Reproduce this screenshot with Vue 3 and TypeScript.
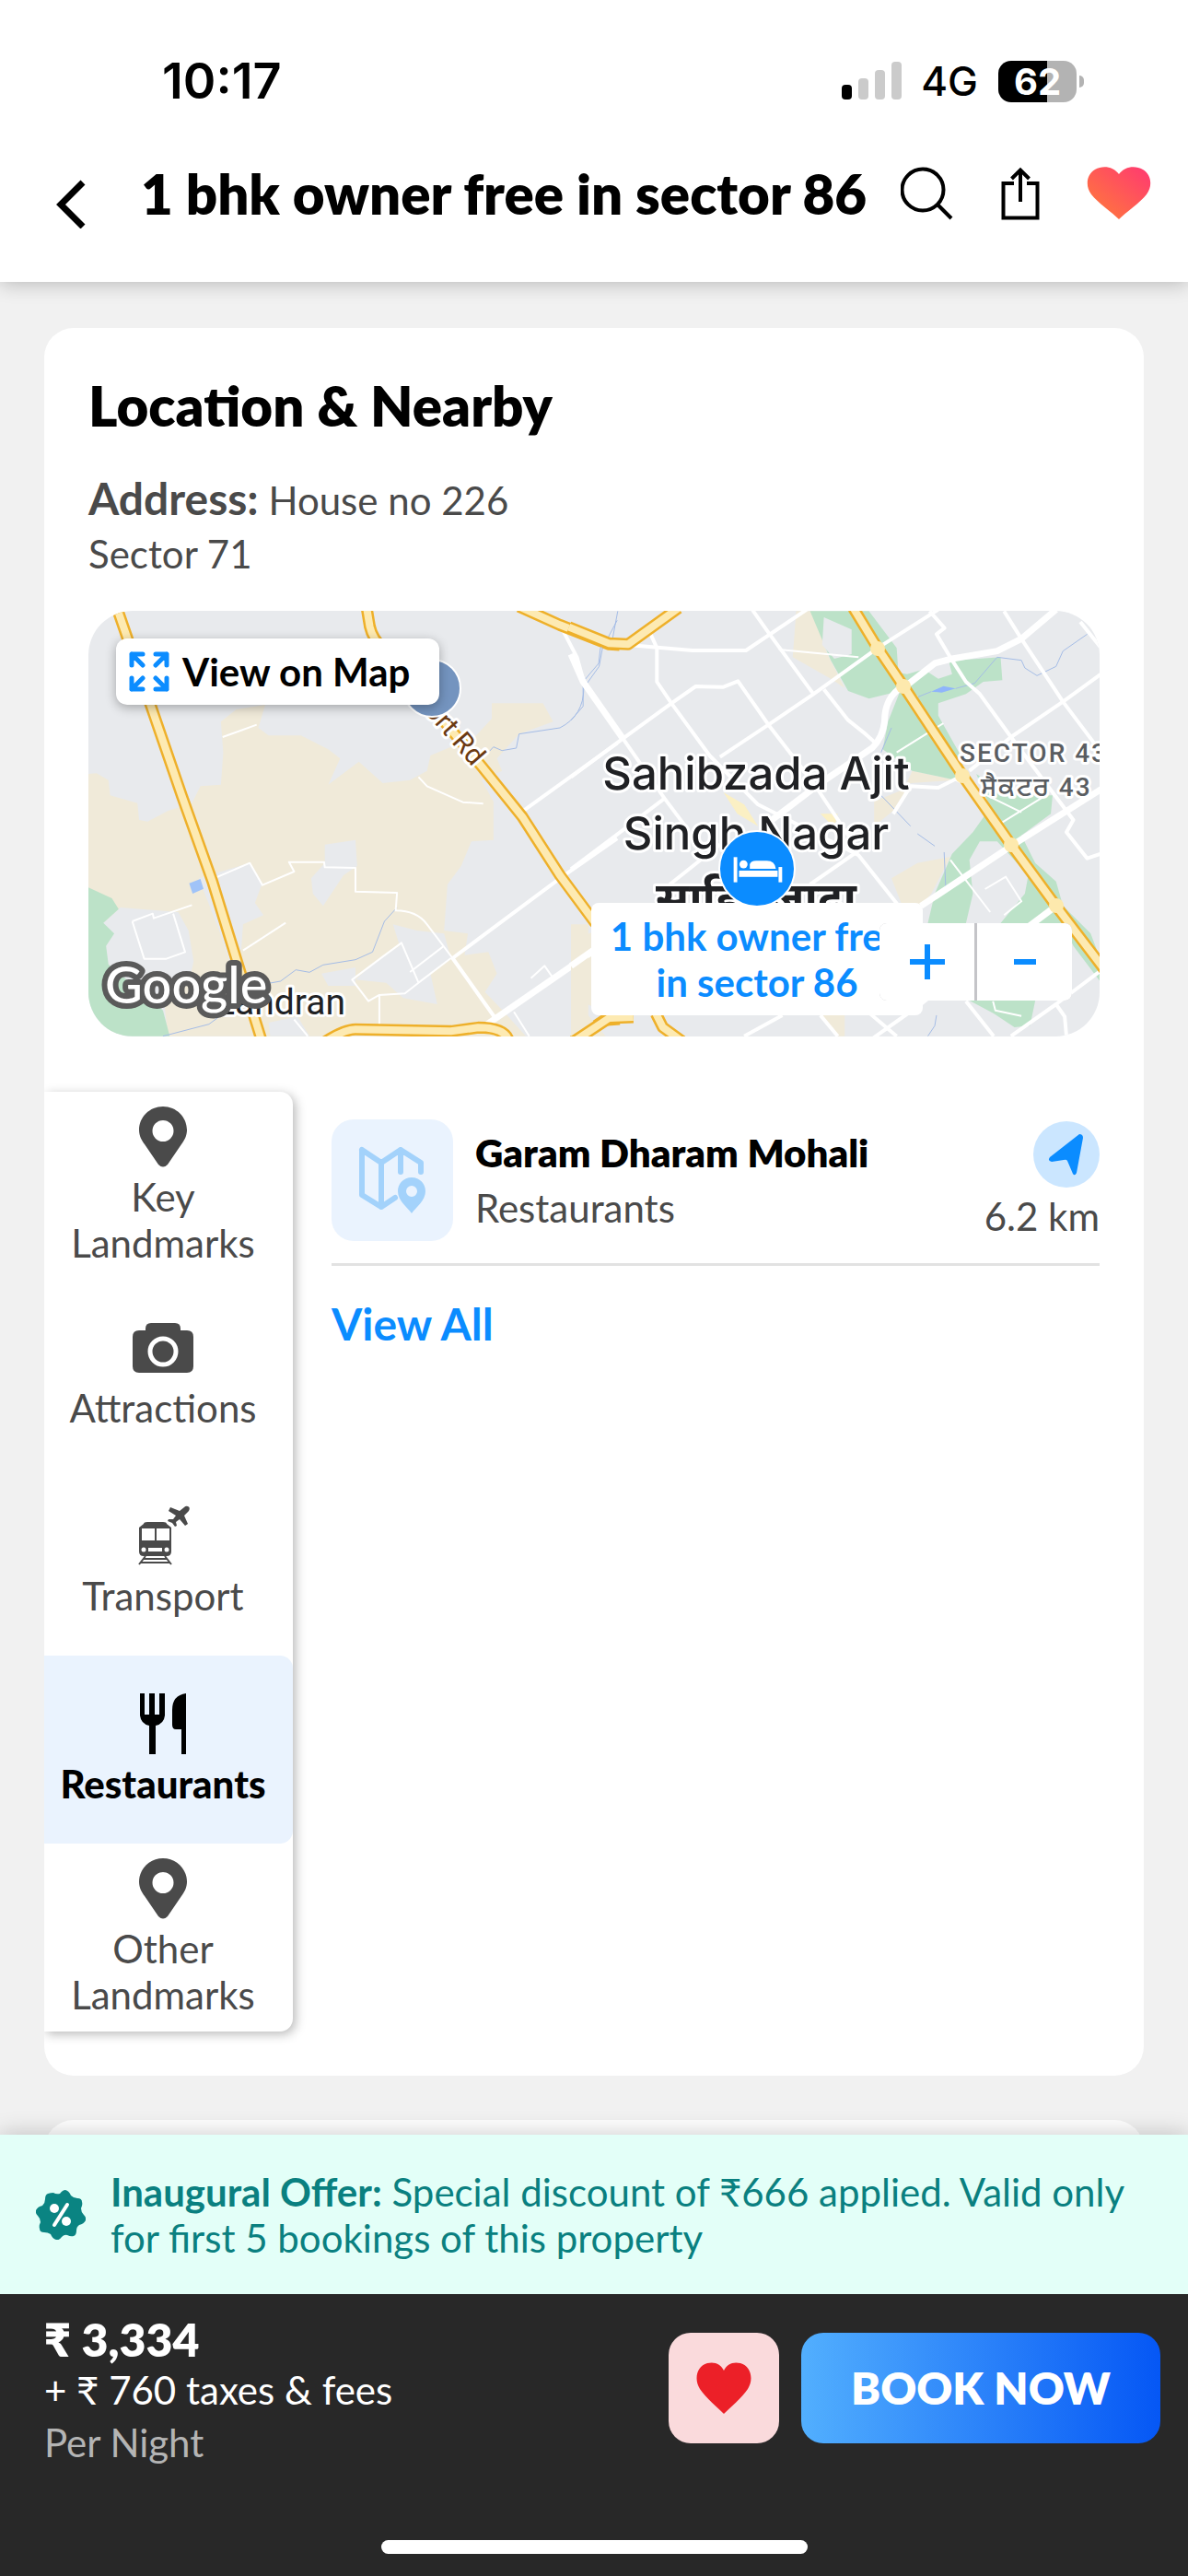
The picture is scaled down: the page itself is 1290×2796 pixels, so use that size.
<script setup lang="ts">
import { ref } from 'vue'

type IconName = 'pin' | 'camera' | 'transport' | 'food'

interface Category {
  id: string
  label: string
  icon: IconName
}

interface Place {
  name: string
  kind: string
  distance: string
}

const title = '1 bhk owner free in sector 86'

const categories: Category[] = [
  { id: 'key', label: 'Key Landmarks', icon: 'pin' },
  { id: 'attractions', label: 'Attractions', icon: 'camera' },
  { id: 'transport', label: 'Transport', icon: 'transport' },
  { id: 'restaurants', label: 'Restaurants', icon: 'food' },
  { id: 'other', label: 'Other Landmarks', icon: 'pin' },
]

const active = ref<string>('restaurants')

const places: Place[] = [
  { name: 'Garam Dharam Mohali', kind: 'Restaurants', distance: '6.2 km' },
]

// Street geometry of the two map tiles, in tile units
const westHighways: string[] = [
  'M100 30L200 350L290 640L380 920L455 1190L525 1440',
  'M833 30L842 90Q850 130 880 160L1170 545L1290 710L1400 900L1500 1050L1568 1130',
  'M1280 25L1400 85L1545 148L1575 150',
  'M700 1450Q765 1402 800 1402L1080 1408L1160 1396Q1240 1396 1250 1440',
  'M1440 1440L1530 1372L1575 1368',
]
const eastHighways: string[] = [
  'M-6 92L110 145L165 148L310 30',
  'M815 30L885 160L960 285L1130 575L1270 800L1400 1000L1545 1215',
  'M10 1440L110 1365L180 1362',
  'M245 1350L265 1395L320 1440',
]
const westStreets: string[] = [
  'M1280 700L1568 470',
  'M1210 1365L1085 1170L1400 910L1568 780',
  'M1405 95L1450 190L1470 270L1568 425',
]
const eastStreets: string[] = [
  'M520 30L570 110L700 310',
  'M165 150L350 168L505 168L700 20',
  'M0 580L150 455L290 340L360 285L440 287L482 268L570 410L700 310L885 160L1060 35',
  'M222 95L248 160L248 270L290 340L400 510L540 670L830 835L960 1020',
  'M570 410L430 515',
  'M570 410L700 600L830 820',
  'M150 455L270 650L330 740',
  'M0 880L130 770L270 650',
  'M285 930L430 800',
  'M730 295L800 395L850 440L880 470',
  'M690 930L830 820',
  'M1035 40L1078 95L1055 115L1100 200L1140 270L1180 310L1270 450L1450 720L1430 760L1490 845L1530 830',
  'M1250 40L1300 130L1420 335L1530 500',
  'M1470 75L1530 160M1530 245L1420 335L1270 450L1150 560',
  'M980 610L1060 615L1130 575M980 610L930 700',
  'M1140 1310L1220 1424M720 1356L770 1424M800 1290L940 1424',
  'M860 1440L1010 1320L1120 1220M1270 1424L1400 1320L1530 1210',
  'M1400 1320L1425 1360L1430 1424',
  'M500 1424L610 1356',
]
const eastAvenues: string[] = [
  'M0 180L35 270L150 455',
  'M965 285L1050 210L1100 195L1230 170L1300 130L1400 35',
  'M945 295Q905 330 905 400Q900 450 870 485L720 600L580 720',
  'M1010 1000L1270 805L1530 620',
  'M0 1195L70 1140',
  'M1300 1085L1400 1000',
]
const lanes: string[] = [
  'M410 450L510 410',
  'M985 580L1010 610L1115 662L1175 667',
  'M385 910L490 860L527 932L620 888L605 857L708 857L710 874L800 876L800 953L922 957L918 1015Q980 1015 1010 1060L1085 1170',
  'M145 1050L205 1025L208 1040L320 997M145 1050L180 1172L245 1172L300 1150L265 1025',
  'M470 1145L595 1055',
  'M790 1240L880 1165L935 1120L985 1250L945 1285L870 1290L838 1310ZM870 1290L870 1400M985 1250L1080 1170M960 1215L1060 1130',
  'M1265 1345L1310 1424M1315 1235L1355 1195L1380 1235M620 1370L660 1424',
]
</script>

<template>
  <div class="page">
    <header class="topbar">
      <div class="status">
        <span class="clock">10:17</span>
        <span class="status-right">
          <svg class="signal" viewBox="0 0 66 42" aria-hidden="true">
            <rect x="0" y="25" width="11" height="16" rx="4" fill="#000" />
            <rect x="18" y="18" width="11" height="23" rx="4" fill="#cbcbcb" />
            <rect x="36" y="9" width="11" height="32" rx="4" fill="#cbcbcb" />
            <rect x="54" y="0" width="11" height="41" rx="4" fill="#cbcbcb" />
          </svg>
          <span class="network">4G</span>
          <span class="battery"><span class="level">62</span><i class="nub"></i></span>
        </span>
      </div>
      <nav class="nav">
        <button class="icon-btn back" type="button" aria-label="Back">
          <svg viewBox="0 0 44 76"><path d="M34 26L10 50L34 74" fill="none" stroke="#000" stroke-width="7" /></svg>
        </button>
        <h1 class="title">{{ title }}</h1>
        <div class="actions">
          <button class="icon-btn" type="button" aria-label="Search">
            <svg viewBox="0 0 58 58" fill="none" stroke="#000">
              <circle cx="24" cy="25" r="22.500" stroke-width="4" />
              <path d="M40 41L55 56" stroke-width="4" />
            </svg>
          </button>
          <button class="icon-btn share" type="button" aria-label="Share">
            <svg viewBox="0 0 44 58" fill="none" stroke="#000" stroke-width="4">
              <path d="M15 18H3.500V55.500H40.500V18H29M22 38V4M12.500 13L22 3.500L31.500 13" />
            </svg>
          </button>
          <button class="icon-btn heart" type="button" aria-label="Saved">
            <svg viewBox="0 0 70 58">
              <defs>
                <linearGradient id="heartFill" x1="0" y1="1" x2="1" y2="0">
                  <stop offset="0.200" stop-color="#ff7043" />
                  <stop offset="0.900" stop-color="#ff3f6c" />
                </linearGradient>
              </defs>
              <path fill="url(#heartFill)" d="M35 57C28 50 12 39 5 30C-2 21 0 8 9 3C18-2 29 0 35 8C41 0 52-2 61 3C70 8 72 21 65 30C58 39 42 50 35 57Z" />
            </svg>
          </button>
        </div>
      </nav>
    </header>

    <main class="content">
      <section class="card">
        <h2 class="heading">Location &amp; Nearby</h2>
        <p class="address"><strong>Address:</strong> House no 226<br />Sector 71</p>

        <div class="map">
          <svg class="map-art" viewBox="0 0 1098 462" preserveAspectRatio="xMidYMid slice" role="img" aria-label="Map">
            <rect width="1098" height="462" fill="#e8eaed" />
            <g class="tile" transform="translate(-6 -13) scale(.37 .33333)">
              <path fill="#f0ead9" d="M16 570L40 568L75 590L80 640L160 665L165 720L190 725L250 690L320 665L345 610L405 605L412 500L405 400L450 360L535 345L515 420L545 445L640 445L720 490L755 520L720 605L810 530L880 600L960 590L1010 560L1020 510L1150 450L1200 390L1200 340L1350 340L1380 400L1280 440L1215 520L1230 560L1170 590L1205 660L1205 785L1140 790L1110 870L1070 930L1060 1080L1130 1090L1120 1160L1190 1150L1215 1220L1180 1280L1240 1350L1300 1424H250L240 1330L320 1200L70 1130L60 1000L16 940Z" />
              <path fill="#f0ead9" d="M1455 1100L1568 1060V1360L1480 1320L1440 1230Z" />
              <path fill="#e8eaed" d="M710 800L800 785L805 870L765 900L705 1000L675 960L670 910L710 860ZM340 910L490 860L525 930L505 990L530 1030L470 1060L465 1140L430 1180L400 1080ZM60 1055L110 1005L280 1020L310 1080L325 1180L310 1260L160 1260L75 1185ZM910 1060L980 1080L1060 1090L1080 1170L1020 1220L1040 1320L940 1300L890 1250L800 1240L870 1170L930 1130ZM700 1220L800 1200L800 1260L720 1260ZM545 1380L630 1360L665 1424H550Z" />
              <path fill="#bce2c8" d="M16 940L85 975L105 1010L60 1055L92 1090L68 1130L75 1190L235 1340L255 1424H0V940Z" />
              <path fill="#a0c3f8" d="M312 926L345 912L354 944L322 960Z" />
              <path class="water" d="M235 1424L370 1385L530 1255L580 1245L625 1208L665 1216L705 1192L800 1175L850 1150L885 1050L922 1005" />
              <path class="water" d="M1190 500L1205 482L1230 494L1272 486L1280 440L1400 420Q1470 380 1470 290L1515 220L1525 160L1568 70" />
              <path v-for="d in lanes" :key="d" class="lane" :d="d" />
              <path class="avenue" d="M1180 1390L1500 1145" />
              <path v-for="d in westStreets" :key="d" class="street" :d="d" />
              <path v-for="d in westHighways" :key="'c' + d" class="casing" :d="d" />
              <path v-for="d in westHighways" :key="'f' + d" class="highway" :d="d" />
            </g>
            <g class="tile" transform="translate(524 -13) scale(.37622 .33333)">
              <path fill="#f0ead9" d="M650 40H700L740 180L790 290L750 260L640 190ZM985 560L1110 590L980 600L930 690L875 740L875 660L960 620ZM925 910L1000 860L1095 840L1040 960L1010 1000L960 1010ZM0 1060H50V1356L100 1424H0ZM720 1356H790V1424H770Z" />
              <path fill="#fbf0c4" d="M440 630L500 670L540 740L480 700ZM720 700L770 700L760 745Z" />
              <path fill="#bce2c8" d="M690 40H860L940 160L945 240L970 245L1110 200L1240 190L1245 265L1190 270L1140 310L1060 340L1060 380L1120 500L1110 590L985 560L900 490L915 400L950 300L860 325L800 300L750 200Z" />
              <path fill="#bce2c8" d="M1170 570L1260 640L1390 640L1385 700L1300 770L1340 860L1400 920L1420 1000L1500 1090L1530 1180V1250L1450 1130L1420 1056H1240L1310 960L1320 900L1230 790L1180 790L1150 850L1160 960L1140 1056H1030L1050 960L1100 830L1160 760L1210 680ZM1150 1308H1340L1325 1390L1280 1395L1220 1350Z" />
              <path fill="#e8eaed" d="M730 60L810 100L810 180L760 195L725 150ZM1020 230L1090 200L1100 245L1060 260Z" />
              <path fill="#8fb5fb" d="M1040 302L1075 284L1110 292L1070 305Z" />
              <path class="water" d="M135 40L120 130L85 160L80 210L35 270L35 350L0 395" />
              <path class="water" d="M1000 320L1040 302M1110 292L1165 275L1230 190L1300 200L1310 225L1345 250L1400 220L1420 170L1490 115M925 420L895 500M895 640L980 740M1000 765L1050 805M1077 825L1082 950M1055 1356L1050 1390L1030 1424" />
              <path class="lane" d="M600 165L830 190M1000 320L960 285M1075 405L940 500M1110 590L1300 695M1370 640L1220 745M1095 850L1210 1020M1195 945L1255 905L1300 985L1250 1030M1218 1310L1225 1340L1300 1358" />
              <path v-for="d in eastStreets" :key="d" class="street" :d="d" />
              <path v-for="d in eastAvenues" :key="d" class="avenue" :d="d" />
              <path v-for="d in eastHighways" :key="'c' + d" class="casing" :d="d" />
              <path v-for="d in eastHighways" :key="'f' + d" class="highway" :d="d" />
            </g>
            <g fill="#fde9ad">
              <circle cx="857" cy="41" r="8" />
              <circle cx="885" cy="82" r="8" />
              <circle cx="949" cy="179" r="8" />
              <circle cx="1002" cy="254" r="8" />
              <circle cx="1051" cy="320" r="8" />
            </g>
            <text class="road-name" transform="translate(353 96) rotate(49)">port Rd</text>
            <circle cx="373" cy="84" r="31" fill="#7494bf" stroke="#fff" stroke-width="2" />
            <g class="place" text-anchor="middle">
              <text x="725" y="194">Sahibzada Ajit</text>
              <text x="725" y="259">Singh Nagar</text>
              <text class="hindi" x="725" y="330">साहिबज़ादा</text>
            </g>
            <g class="sector">
              <text x="946" y="164">SECTOR 43</text>
              <text x="969" y="201">ਸੈਕਟਰ 43</text>
            </g>
            <text class="village" x="138" y="438">Landran</text>
            <text class="brand" x="18" y="426">Google</text>
          </svg>

          <button class="view-map" type="button">
            <svg viewBox="0 0 44 44" fill="none" stroke="#0b8cff" stroke-width="5" stroke-linecap="round" stroke-linejoin="round" aria-hidden="true">
              <path d="M3 15V3H15M3 3L15 15M29 3H41V15M41 3L29 15M3 29V41H15M3 41L15 29M41 29V41H29M41 41L29 29" />
            </svg>
            View on Map
          </button>

          <div class="marker-label">{{ title }}</div>
          <span class="marker">
            <svg viewBox="0 0 82 82" fill="#fff" aria-hidden="true">
              <rect x="15" y="28" width="4" height="28" />
              <rect x="65" y="39" width="4" height="17" />
              <rect x="21" y="43" width="43" height="7" />
              <circle cx="26" cy="36" r="4.500" />
              <path d="M33 41V36Q34 32 40 32H52Q61 32 62 41Z" />
            </svg>
          </span>
          <div class="zoom">
            <button type="button" aria-label="Zoom in"><svg viewBox="0 0 40 40"><path d="M20 1V39M1 20H39" stroke="#0b8cff" stroke-width="6" /></svg></button>
            <button type="button" aria-label="Zoom out"><svg viewBox="0 0 40 40"><path d="M8 20H32" stroke="#0b8cff" stroke-width="6" /></svg></button>
          </div>
        </div>

        <div class="nearby">
          <div class="tabs" role="tablist">
            <button
              v-for="c in categories"
              :key="c.id"
              class="tab"
              :class="{ selected: c.id === active }"
              type="button"
              role="tab"
              :aria-selected="c.id === active"
              @click="active = c.id"
            >
              <svg class="tab-icon" viewBox="0 0 66 66" fill="currentColor" aria-hidden="true">
                <path v-if="c.icon === 'pin'" fill-rule="evenodd" d="M33 0C18.500 0 7 11.500 7 25.500C7 32 10 37 13 41L28 63Q33 68 38 63L53 41C56 37 59 32 59 25.500C59 11.500 47.500 0 33 0ZM33 15A11.500 11.500 0 1 1 33 38A11.500 11.500 0 1 1 33 15Z" />
                <template v-else-if="c.icon === 'camera'">
                  <path d="M14 14V12Q14 6 20 6H46Q52 6 52 12V14H59Q66 14 66 21V53Q66 60 59 60H7Q0 60 0 53V21Q0 14 7 14Z" />
                  <circle cx="33" cy="37" r="14" fill="none" stroke="#fff" stroke-width="5" />
                </template>
                <template v-else-if="c.icon === 'transport'">
                  <path d="M12 20Q12 18 16 18H33Q37 18 37 20L42 24V50Q42 55 37 55H12Q7 55 7 50V24Z" />
                  <path fill="#fff" d="M10 25H24V38H10ZM26 25H40V38H26ZM17 46H32V50H17Z" />
                  <circle cx="12" cy="48" r="2.500" fill="#fff" />
                  <circle cx="37" cy="48" r="2.500" fill="#fff" />
                  <path d="M14 55L7 64M35 55L42 64M12 58H37M9 62H40" fill="none" stroke="currentColor" stroke-width="2" />
                  <path d="M60 1Q63 2 61 6L56 11L60 20L57 22L51 15L47 18L48 22L46 23L43 19L38 17L39 15L44 15L47 11L39 6L41 2L51 6L56 2Q58 0 60 1Z" />
                </template>
                <template v-else>
                  <path d="M8 0H13V23H18V0H24V23H29V0H35V24Q34 33 25 35V66H18V35Q9 33 8 24Z" />
                  <path d="M58 0V66H53V39H47Q43 39 43 34V18Q43 2 58 0Z" />
                </template>
              </svg>
              <span class="tab-label">{{ c.label }}</span>
            </button>
          </div>

          <div class="places">
            <article v-for="p in places" :key="p.name" class="place-row">
              <span class="thumb">
                <svg viewBox="0 0 132 132" fill="none" stroke="#a3d2fb" stroke-width="6" stroke-linecap="round" stroke-linejoin="round" aria-hidden="true">
                  <path d="M33 33V82L54 95L69 85M33 33L54 47V95M54 47L75 33L97 47V57M75 33V57" />
                  <path fill="#a3d2fb" stroke="none" fill-rule="evenodd" d="M87 63C78 63 72 70 72 78C72 88 82 95 87 102C92 95 102 88 102 78C102 70 96 63 87 63ZM87 72A6 6 0 1 1 87 84A6 6 0 1 1 87 72Z" />
                </svg>
              </span>
              <div class="place-text">
                <h3>{{ p.name }}</h3>
                <p>{{ p.kind }}</p>
              </div>
              <div class="place-side">
                <button class="locate" type="button" aria-label="Directions">
                  <svg viewBox="0 0 72 72"><path d="M50 14Q54 14 54 18L47 56Q45 60 43 57L37 43Q36 41 33 42L20 44Q15 43 18 39Z" fill="#0b8cff" /></svg>
                </button>
                <span>{{ p.distance }}</span>
              </div>
            </article>
            <a class="view-all" href="#">View All</a>
          </div>
        </div>
      </section>

      <section class="card next"></section>
    </main>

    <footer class="footer">
      <div class="offer">
        <svg class="badge" viewBox="0 0 54 54" aria-hidden="true">
          <path fill="#0a8482" d="M19 3Q22 5 26 4Q29 0 32 0Q36 1 38 6Q41 9 45 9Q50 9 50 13Q51 16 49 20Q49 24 52 27Q55 30 54 33Q52 37 47 38Q44 40 44 44Q44 49 41 50Q38 51 34 49Q31 48 28 51Q25 55 22 54Q18 53 16 48Q13 46 9 46Q4 46 4 42Q3 39 5 35Q5 31 2 28Q-1 25 0 22Q2 18 7 17Q10 14 10 10Q10 5 13 4Q16 3 19 3Z" />
          <path d="M20 38L34 16" stroke="#fff" stroke-width="4" stroke-linecap="round" />
          <circle cx="20" cy="20" r="5" fill="#fff" />
          <circle cx="33" cy="34" r="5" fill="#fff" />
        </svg>
        <p><strong>Inaugural Offer:</strong> Special discount of ₹666 applied. Valid only for first 5 bookings of this property</p>
      </div>
      <div class="booking">
        <div class="booking-row">
          <div class="price">
            <strong>₹ 3,334</strong>
            <span>+ ₹ 760 taxes &amp; fees</span>
            <span class="per">Per Night</span>
          </div>
          <div class="booking-actions">
            <button class="wish" type="button" aria-label="Wishlist">
              <svg viewBox="0 0 60 56"><path fill="#ec2028" d="M30 56C24 50 10 38 4 29C-3 18 1 4 12 1C20-1 27 2 30 9C33 2 40-1 48 1C59 4 63 18 56 29C50 38 36 50 30 56Z" /></svg>
            </button>
            <button class="book" type="button">BOOK NOW</button>
          </div>
        </div>
        <div class="home-bar"></div>
      </div>
    </footer>
  </div>
</template>

<style>
body {
  background: #f1f1f1;
}
</style>

<style scoped>
.page,
.page * {
  box-sizing: border-box;
}
.page {
  min-height: 100vh;
  background: #f1f1f1;
  color: #4a4a4a;
  font-family: Lato, "Liberation Sans", sans-serif;
  font-size: 42px;
  line-height: 50px;
}
h1, h2, h3, p {
  margin: 0;
}
button {
  margin: 0;
  padding: 0;
  border: 0;
  background: none;
  color: inherit;
  font: inherit;
  cursor: pointer;
}
svg {
  display: block;
}

.topbar {
  position: relative;
  z-index: 1;
  padding-top: 56px;
  padding-bottom: 36px;
  background: #fff;
  box-shadow: 0 2px 20px rgba(0, 0, 0, 0.24);
}
.status {
  display: flex;
  align-items: center;
  justify-content: space-between;
  height: 64px;
  padding: 0 113px 0 176px;
  color: #000;
  font-family: Inter, sans-serif;
}
.clock {
  font-size: 54px;
  font-weight: 600;
}
.status-right {
  display: flex;
  align-items: center;
}
.signal {
  width: 66px;
  height: 42px;
}
.network {
  margin: 0 22px 0 20px;
  font-size: 44px;
  font-weight: 500;
}
.battery {
  position: relative;
  display: block;
  width: 85px;
  height: 45px;
  margin-right: 8px;
  border-radius: 14px;
  background: linear-gradient(90deg, #000 62%, #b3b3b3 62%);
  color: #fff;
  font-size: 40px;
  font-weight: 700;
  line-height: 45px;
  text-align: center;
}
.nub {
  position: absolute;
  top: 16px;
  right: -8px;
  width: 5px;
  height: 13px;
  border-radius: 0 5px 5px 0;
  background: #b3b3b3;
}
.nav {
  display: flex;
  align-items: center;
  height: 120px;
  margin-top: 30px;
  padding: 0 40px 0 56px;
}
.icon-btn svg {
  width: 58px;
  height: 58px;
}
.back {
  width: 97px;
}
.back svg {
  width: 44px;
  height: 76px;
}
.title {
  flex: 1;
  color: #000;
  font-size: 60px;
  font-weight: 800;
  line-height: 72px;
  white-space: nowrap;
}
.actions {
  display: flex;
  gap: 50px;
}
.icon-btn.share svg {
  width: 44px;
}
.icon-btn.heart svg {
  width: 70px;
}

.content {
  padding: 50px 48px 0;
}
.card {
  padding: 48px;
  overflow: hidden;
  border-radius: 32px;
  background: #fff;
}
.card.next {
  min-height: 320px;
  margin-top: 48px;
}
.heading {
  color: #000;
  font-size: 60px;
  font-weight: 800;
  line-height: 72px;
}
.address {
  margin-top: 36px;
  line-height: 58px;
}
.address strong {
  font-size: 48px;
  font-weight: 700;
}

.map {
  position: relative;
  height: 462px;
  margin-top: 33px;
  overflow: hidden;
  border-radius: 48px;
}
.map-art {
  width: 100%;
  height: 100%;
}
.tile path {
  vector-effect: non-scaling-stroke;
}
.water, .lane, .street, .avenue, .casing, .highway {
  fill: none;
  stroke-linejoin: round;
}
.water {
  stroke: #a4bce6;
  stroke-width: 1px;
}
.lane {
  stroke: #fff;
  stroke-width: 2px;
}
.street {
  stroke: #fff;
  stroke-width: 4px;
}
.avenue {
  stroke: #fff;
  stroke-width: 7px;
}
.casing {
  stroke: #eeb02a;
  stroke-width: 13px;
}
.highway {
  stroke: #fdeab2;
  stroke-width: 8px;
}
.place, .village, .sector, .road-name, .brand {
  font-family: Roboto, "Noto Sans", "Noto Sans Devanagari", "Noto Sans Gurmukhi", sans-serif;
  paint-order: stroke;
  stroke: #fff;
  stroke-width: 6px;
  stroke-linejoin: round;
}
.place {
  fill: #202124;
  font-family: Inter, "Noto Sans Devanagari", sans-serif;
  font-size: 49px;
  font-weight: 500;
}
.hindi {
  font-weight: 700;
}
.village {
  fill: #202124;
  font-size: 39px;
}
.sector {
  fill: #5a5d61;
  font-size: 28px;
  font-weight: 500;
  letter-spacing: 2px;
}
.road-name {
  fill: #6b3a12;
  font-size: 30px;
}
.brand {
  fill: #fff;
  stroke: #5a5a5a;
  stroke-width: 12px;
  font-family: Lato, sans-serif;
  font-size: 56px;
  font-weight: 500;
}
.view-map {
  position: absolute;
  top: 30px;
  left: 30px;
  display: flex;
  align-items: center;
  gap: 14px;
  height: 72px;
  padding: 0 32px 0 14px;
  border-radius: 12px;
  background: #fff;
  box-shadow: 0 3px 12px rgba(0, 0, 0, 0.3);
  color: #000;
  font-weight: 700;
}
.view-map svg {
  width: 44px;
  height: 44px;
}
.marker-label {
  position: absolute;
  top: 317px;
  left: 546px;
  width: 360px;
  padding: 11px 20px;
  border-radius: 8px;
  background: #fff;
  color: #0b8cff;
  font-weight: 700;
  text-align: center;
}
.marker {
  position: absolute;
  top: 238px;
  left: 684px;
  width: 84px;
  height: 84px;
  border: 2px solid #fff;
  border-radius: 50%;
  background: #0b8cff;
}
.zoom {
  position: absolute;
  right: 30px;
  bottom: 39px;
  display: flex;
  gap: 3px;
  overflow: hidden;
  border-radius: 8px;
  background: #c4c4c8;
}
.zoom button {
  display: grid;
  place-items: center;
  width: 103px;
  height: 84px;
  background: #fff;
}
.zoom svg {
  width: 40px;
  height: 40px;
}

.nearby {
  display: flex;
  gap: 42px;
  margin-top: 60px;
}
.tabs {
  flex: none;
  width: 270px;
  margin-left: -48px;
  border-radius: 0 14px 14px 0;
  box-shadow: 3px 3px 12px rgba(0, 0, 0, 0.28);
}
.tab {
  display: flex;
  flex-direction: column;
  align-items: center;
  justify-content: center;
  gap: 7px;
  width: 100%;
  height: 204px;
  padding: 0 22px 0 10px;
  border-radius: 0 14px 14px 0;
}
.tab.selected {
  background: #eaf3fe;
  color: #000;
  font-weight: 900;
}
.tab-icon {
  flex: none;
  width: 66px;
  height: 66px;
}
.places {
  flex: 1;
  min-width: 0;
  padding-top: 30px;
}
.place-row {
  display: flex;
  align-items: center;
  gap: 24px;
  padding-bottom: 24px;
  border-bottom: 3px solid #e2e2e2;
}
.thumb {
  flex: none;
  width: 132px;
  height: 132px;
  border-radius: 24px;
  background: #eaf3fe;
}
.place-text {
  flex: 1;
  line-height: 60px;
}
.place-text h3 {
  color: #000;
  font-size: 42px;
  font-weight: 800;
}
.place-side {
  display: flex;
  flex-direction: column;
  align-items: flex-end;
  gap: 6px;
}
.locate {
  width: 72px;
  height: 72px;
  border-radius: 50%;
  background: #cbe6ff;
}
.view-all {
  display: inline-block;
  margin-top: 34px;
  color: #0b8cff;
  font-size: 48px;
  font-weight: 700;
  line-height: 58px;
  text-decoration: none;
}

.footer {
  position: fixed;
  right: 0;
  bottom: 0;
  left: 0;
  box-shadow: 0 0 24px rgba(0, 0, 0, 0.22);
}
.offer {
  display: flex;
  align-items: center;
  gap: 27px;
  padding: 37px 39px 36px;
  background: #e3fff8;
  color: #0a8080;
}
.badge {
  flex: none;
  width: 54px;
  height: 54px;
}
.booking {
  padding: 22px 0 24px;
  background: #282828;
  color: #fff;
}
.booking-row {
  display: flex;
  align-items: flex-start;
  padding: 0 30px 0 48px;
}
.price {
  display: flex;
  flex: 1;
  flex-direction: column;
  line-height: 57px;
}
.price strong {
  font-size: 50px;
  font-weight: 800;
  line-height: 54px;
}
.per {
  color: #b4b4b4;
}
.booking-actions {
  display: flex;
  gap: 24px;
  padding-top: 20px;
}
.wish {
  display: grid;
  place-items: center;
  width: 120px;
  height: 120px;
  border-radius: 24px;
  background: #fadadc;
}
.wish svg {
  width: 60px;
  height: 56px;
}
.book {
  width: 390px;
  height: 120px;
  border-radius: 24px;
  background: linear-gradient(90deg, #52affe, #0557f5);
  font-size: 48px;
  font-weight: 800;
}
.home-bar {
  width: 463px;
  height: 15px;
  margin: 77px auto 0;
  border-radius: 8px;
  background: #fff;
}
</style>
